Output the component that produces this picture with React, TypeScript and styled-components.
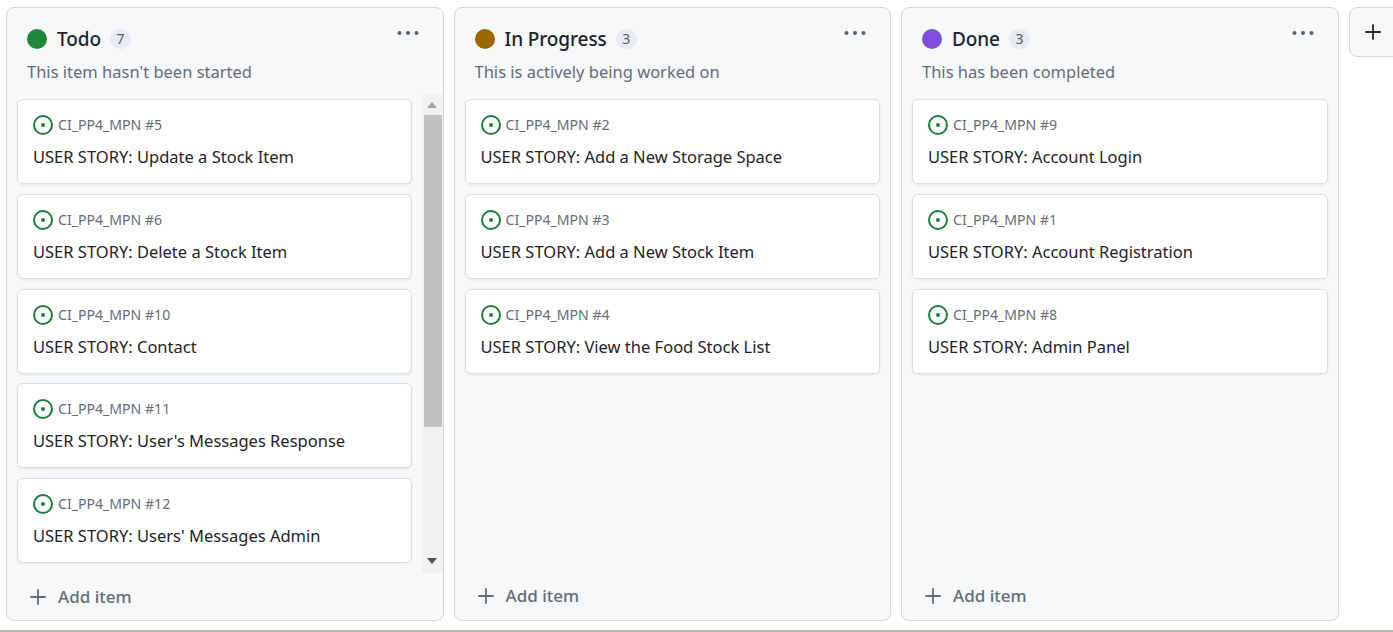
import React from "react";
import styled, { createGlobalStyle } from "styled-components";

const GlobalStyle = createGlobalStyle`
  html, body {
    margin: 0;
    background: #fff;
    overflow: hidden;
  }
  body {
    font-family: "Noto Sans", "Open Sans", sans-serif;
    color: #1f2328;
  }
`;

const Page = styled.div`
  width: 1393px;
  height: 632px;
  box-sizing: border-box;
  border-bottom: 2px solid #b9bcae;
  padding: 7px 0 9px 6px;
  display: flex;
  gap: 10px;
  overflow: hidden;
`;

const Column = styled.section`
  flex: 0 0 437.5px;
  box-sizing: border-box;
  display: flex;
  flex-direction: column;
  background: #f6f8fa;
  border: 1px solid #d0d7de;
  border-radius: 8px;
  min-height: 0;
`;

const ColumnHeader = styled.header`
  height: 86px;
  flex: none;
  padding: 0 20px;
  box-sizing: border-box;
  position: relative;
`;

const TitleRow = styled.div`
  display: flex;
  align-items: center;
  height: 24px;
  margin-top: 19px;
`;

const StatusDot = styled.span<{ $color: string }>`
  width: 20px;
  height: 20px;
  border-radius: 50%;
  background: ${({ $color }) => $color};
  margin-right: 10px;
`;

const Title = styled.h2`
  margin: 0;
  font-size: 19px;
  line-height: 24px;
  font-weight: 500;
  letter-spacing: -0.1px;
  color: #1f2328;
`;

const Count = styled.span`
  margin-left: 9px;
  width: 21px;
  height: 20px;
  border-radius: 10px;
  background: #e8ebef;
  color: #57606a;
  font-size: 14px;
  line-height: 19px;
  text-align: center;
`;

const MoreButton = styled.span`
  position: absolute;
  right: 24px;
  top: 22px;
  display: flex;
  color: #57606a;
`;

const Description = styled.p`
  margin: 10px 0 0;
  font-size: 16.5px;
  line-height: 22px;
  color: #656d76;
`;

const Body = styled.div`
  flex: 1;
  min-height: 0;
  display: flex;
  position: relative;
`;

const CardList = styled.div`
  flex: 1;
  display: flex;
  flex-direction: column;
  gap: 9.75px;
  padding: 5px 10px 0;
  min-width: 0;
`;

const Card = styled.article`
  height: 85px;
  flex: none;
  box-sizing: border-box;
  background: #fff;
  border: 1px solid #d8dee4;
  border-radius: 6px;
  box-shadow: 0 1px 3px rgba(31, 35, 40, 0.08);
  padding: 15px 15px 0;
`;

const CardMeta = styled.div`
  display: flex;
  align-items: center;
  height: 20px;
  gap: 5px;
  font-size: 14.1px;
  line-height: 20px;
  color: #656d76;
`;

const CardTitle = styled.div`
  margin-top: 11px;
  font-size: 16.5px;
  line-height: 22px;
  color: #1f2328;
`;

const Scrollbar = styled.div`
  flex: 0 0 21px;
  background: #f1f1f1;
  display: flex;
  flex-direction: column;
  align-items: center;
  position: relative;
`;

const ScrollArrow = styled.span<{ $down?: boolean }>`
  height: 21px;
  flex: none;
  display: flex;
  align-items: center;
  justify-content: center;
  color: ${({ $down }) => ($down ? "#505050" : "#a3a3a3")};
  margin-bottom: ${({ $down }) => ($down ? "2px" : "0")};
`;

const ScrollThumb = styled.div`
  width: 18px;
  height: 312px;
  flex: none;
  margin-left: 2px;
  background: #c1c1c1;
`;

const ScrollTrack = styled.div`
  flex: 1;
`;

const Footer = styled.footer<{ $height: number }>`
  height: ${({ $height }) => $height}px;
  flex: none;
  display: flex;
  align-items: center;
  gap: 12px;
  padding-left: 23px;
  font-size: 17px;
  font-weight: 500;
  color: #656d76;
`;

const AddColumn = styled.div`
  flex: none;
  width: 60px;
  height: 50px;
  box-sizing: border-box;
  background: #f6f8fa;
  border: 1px solid #d0d7de;
  border-radius: 8px;
  display: flex;
  align-items: center;
  padding-left: 15px;
  color: #24292f;
`;

const IssueIcon = () => (
  <svg width="20" height="20" viewBox="0 0 20 20" fill="none">
    <circle cx="10" cy="10" r="9" stroke="#1a7f37" strokeWidth="2" />
    <circle cx="10" cy="10" r="2" fill="#1a7f37" />
  </svg>
);

const PlusIcon = ({ size }: { size: number }) => (
  <svg width={size} height={size} viewBox="0 0 16 16" fill="none">
    <path d="M8 1v14M1 8h14" stroke="currentColor" strokeWidth="1.8" strokeLinecap="round" />
  </svg>
);

const DotsIcon = () => (
  <svg width="22" height="6" viewBox="0 0 22 6" fill="currentColor">
    <circle cx="2.5" cy="3" r="2" />
    <circle cx="11" cy="3" r="2" />
    <circle cx="19.5" cy="3" r="2" />
  </svg>
);

const columns = [
  {
    title: "Todo",
    color: "#1f883d",
    count: 7,
    description: "This item hasn't been started",
    scroll: true,
    cards: [
      { num: 5, title: "USER STORY: Update a Stock Item" },
      { num: 6, title: "USER STORY: Delete a Stock Item" },
      { num: 10, title: "USER STORY: Contact" },
      { num: 11, title: "USER STORY: User's Messages Response" },
      { num: 12, title: "USER STORY: Users' Messages Admin" },
    ],
  },
  {
    title: "In Progress",
    color: "#9a6700",
    count: 3,
    description: "This is actively being worked on",
    scroll: false,
    cards: [
      { num: 2, title: "USER STORY: Add a New Storage Space" },
      { num: 3, title: "USER STORY: Add a New Stock Item" },
      { num: 4, title: "USER STORY: View the Food Stock List" },
    ],
  },
  {
    title: "Done",
    color: "#8250df",
    count: 3,
    description: "This has been completed",
    scroll: false,
    cards: [
      { num: 9, title: "USER STORY: Account Login" },
      { num: 1, title: "USER STORY: Account Registration" },
      { num: 8, title: "USER STORY: Admin Panel" },
    ],
  },
];

const App = () => {
  return (
    <>
      <GlobalStyle />
      <Page>
        {columns.map((col) => (
          <Column key={col.title}>
            <ColumnHeader>
              <TitleRow>
                <StatusDot $color={col.color} />
                <Title>{col.title}</Title>
                <Count>{col.count}</Count>
              </TitleRow>
              <Description>{col.description}</Description>
              <MoreButton>
                <DotsIcon />
              </MoreButton>
            </ColumnHeader>
            <Body>
              <CardList>
                {col.cards.map((card) => (
                  <Card key={card.num}>
                    <CardMeta>
                      <IssueIcon />
                      CI_PP4_MPN #{card.num}
                    </CardMeta>
                    <CardTitle>{card.title}</CardTitle>
                  </Card>
                ))}
              </CardList>
              {col.scroll && (
                <Scrollbar>
                  <ScrollArrow>
                    <svg width="10" height="6" viewBox="0 0 10 6" fill="currentColor">
                      <path d="M5 0l5 6H0z" />
                    </svg>
                  </ScrollArrow>
                  <ScrollThumb />
                  <ScrollTrack />
                  <ScrollArrow $down>
                    <svg width="10" height="6" viewBox="0 0 10 6" fill="currentColor">
                      <path d="M0 0h10L5 6z" />
                    </svg>
                  </ScrollArrow>
                </Scrollbar>
              )}
            </Body>
            <Footer $height={col.scroll ? 47 : 49}>
              <PlusIcon size={16} />
              Add item
            </Footer>
          </Column>
        ))}
        <AddColumn>
          <PlusIcon size={16} />
        </AddColumn>
      </Page>
    </>
  );
};

export default App;
